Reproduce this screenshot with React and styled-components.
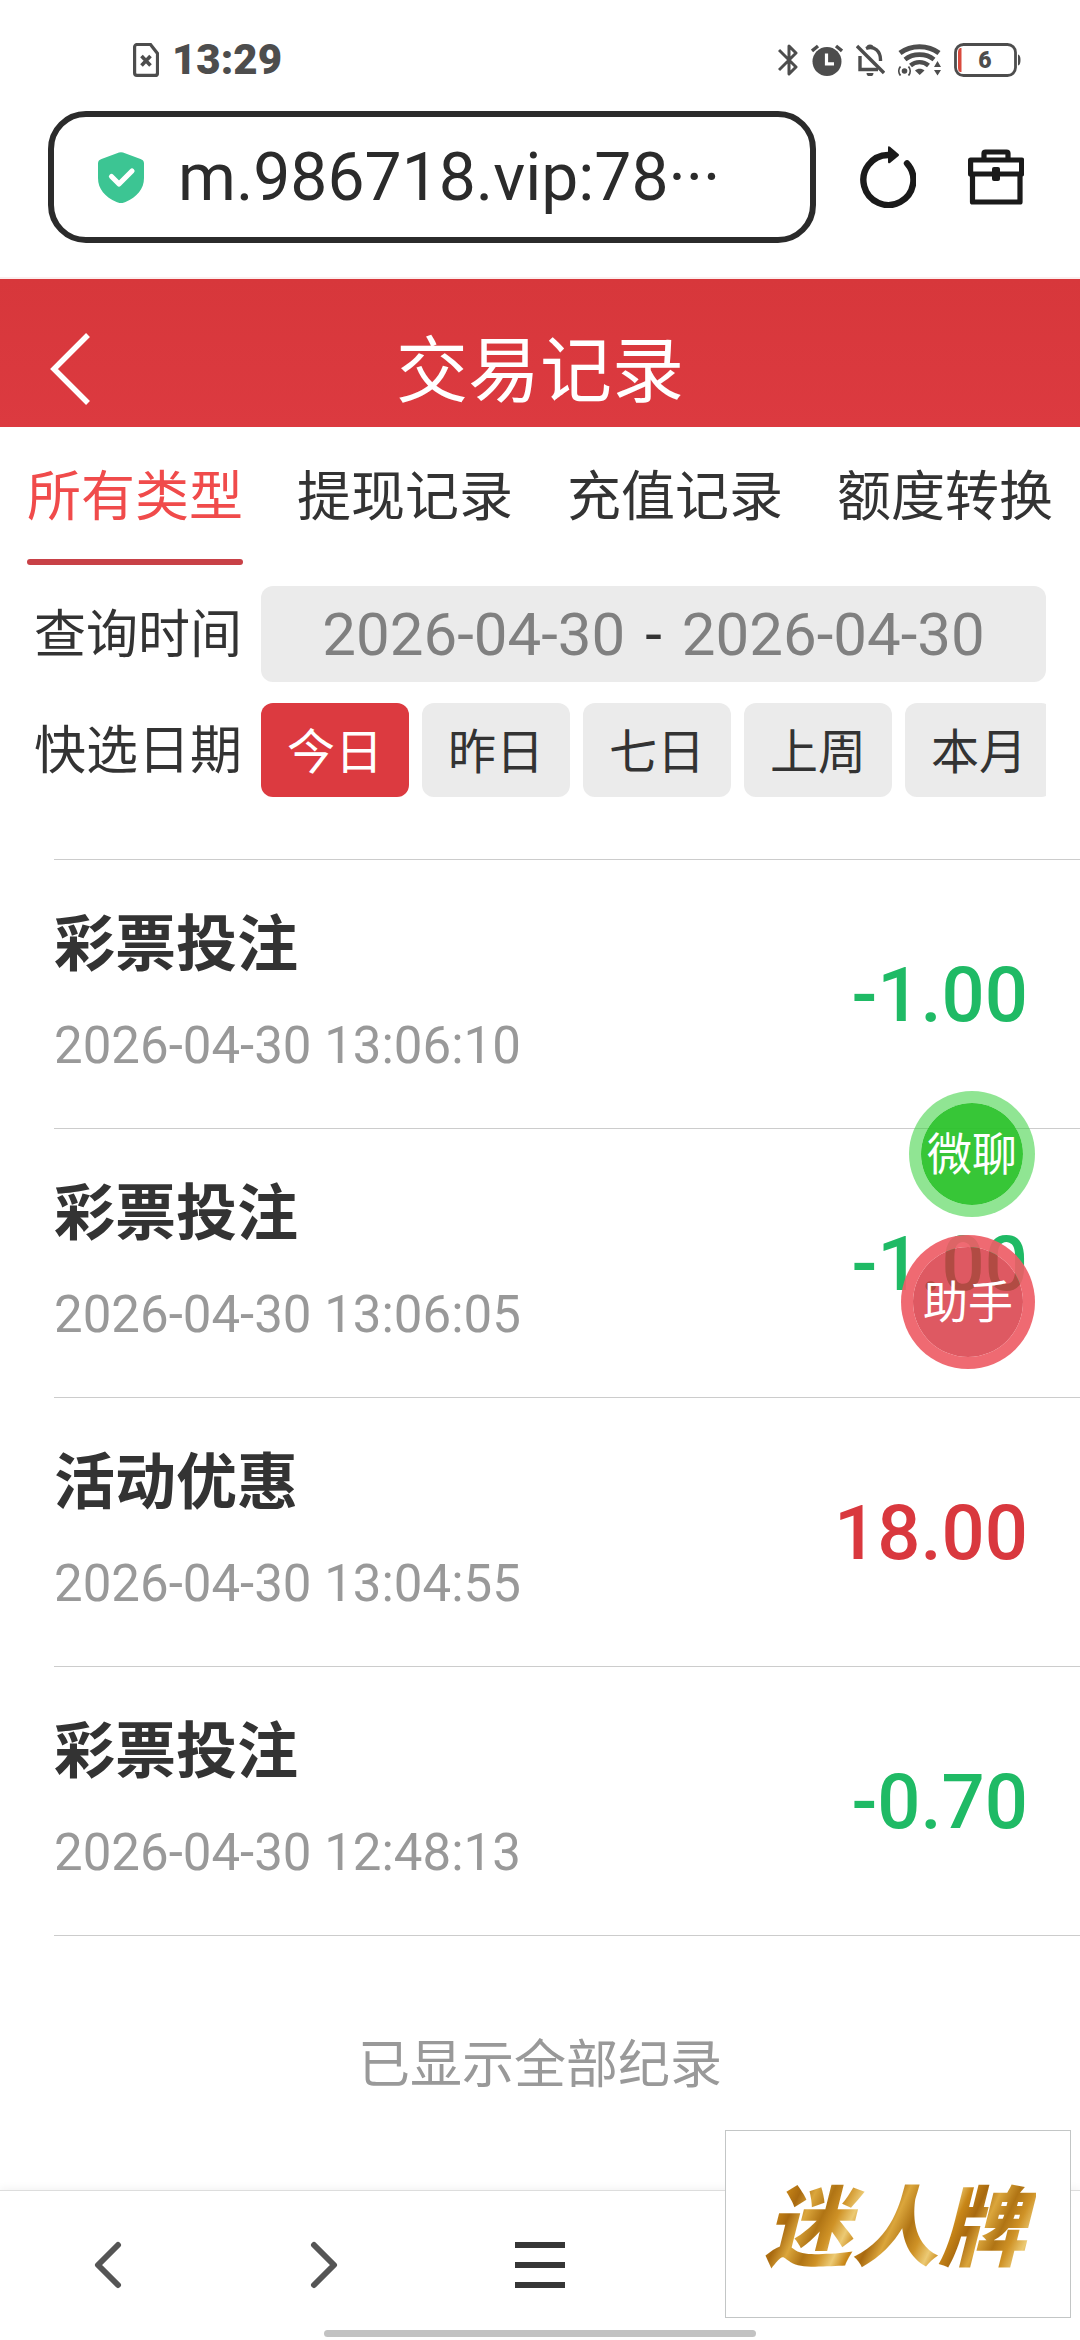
import React, { useState } from 'react';
import styled, { createGlobalStyle } from 'styled-components';

const color = {
  accent: '#dc3a40',
  accentDark: '#d7373b',
  dark: '#2b2b2b',
  field: '#ebebeb',
  gray: '#999999',
  green: '#1fba65',
  line: '#cccccc',
  status: '#4d4d4d',
  text: '#333333',
  white: '#ffffff',
};

const GlobalStyle = createGlobalStyle`
  * {
    box-sizing: border-box;
  }

  body {
    background-color: ${color.white};
    color: ${color.text};
    font-family: Roboto, 'Noto Sans CJK SC', sans-serif;
    margin: 0;
  }

  button,
  input {
    background: none;
    border: 0;
    color: inherit;
    font: inherit;
    margin: 0;
    padding: 0;
  }

  svg {
    display: block;
  }
`;

const StyledPage = styled.div`
  display: flex;
  flex-direction: column;
  min-height: 100vh;
  position: relative;
`;

const StyledStatusBar = styled.div`
  align-items: center;
  color: ${color.status};
  display: flex;
  height: 76px;
  justify-content: space-between;
  margin-bottom: 35px;
  padding: 43px 59px 0 133px;
`;

const StyledStatusGroup = styled.div`
  align-items: center;
  display: flex;
  gap: 13px;
`;

const StyledTime = styled.time`
  font-size: 42px;
  font-weight: 900;
  line-height: 32px;
`;

const StyledBrowserBar = styled.div`
  align-items: center;
  border-bottom: 2px solid #fbeeee;
  display: flex;
  padding: 0 56px 34px 48px;
`;

const StyledAddress = styled.label`
  align-items: center;
  border: 6px solid ${color.dark};
  border-radius: 38px;
  color: ${color.dark};
  display: flex;
  flex: 1;
  gap: 34px;
  height: 132px;
  margin-right: 44px;
  min-width: 0;
  padding: 0 44px;
`;

const StyledAddressInput = styled.input`
  flex: 1;
  font-size: 66px;
  height: 88px;
  min-width: 0;
  outline: none;
`;

const StyledBrowserButton = styled.button`
  color: #1a1a1a;

  & + & {
    margin-left: 52px;
  }
`;

const StyledHeader = styled.header`
  align-items: center;
  background: linear-gradient(${color.accentDark}, ${color.accent});
  color: ${color.white};
  display: grid;
  grid-template-columns: 1fr auto 1fr;
  height: 148px;
  padding: 32px 50px 0;
`;

const StyledTitle = styled.h1`
  font-size: 72px;
  font-weight: 400;
  line-height: 100px;
  margin: 0;
  padding-top: 6px;
`;

const StyledMain = styled.main`
  flex: 1;
`;

const StyledTabs = styled.div`
  display: grid;
  grid-template-columns: repeat(4, 1fr);
  justify-items: center;
`;

const StyledTab = styled.button`
  color: ${({ $active }) => ($active ? '#f04b4b' : color.text)};
  font-size: 54px;
  line-height: 64px;
  padding: 39px 0 0;
  white-space: nowrap;

  &::after {
    background-color: ${({ $active }) => ($active ? '#c84147' : 'transparent')};
    border-radius: 3px;
    content: '';
    display: block;
    height: 6px;
    margin-top: 29px;
  }
`;

const StyledFilters = styled.div`
  display: grid;
  gap: 21px;
  grid-template-columns: minmax(0, 1fr);
  padding: 21px 34px 62px 34px;
`;

const StyledFilterRow = styled.div`
  align-items: center;
  display: flex;
  gap: 19px;
`;

const StyledFilterLabel = styled.label`
  font-size: 52px;
  line-height: 90px;
  padding-top: 4px;
  white-space: nowrap;
`;

const StyledDateRange = styled.div`
  align-items: center;
  background-color: ${color.field};
  border-radius: 12px;
  display: flex;
  flex: 1;
  font-size: 60px;
  gap: 20px;
  height: 96px;
  min-width: 0;
`;

const StyledDateInput = styled.input`
  color: #808080;
  flex: 1;
  height: 96px;
  min-width: 0;
  text-align: ${({ $align }) => $align};
`;

const StyledQuickDates = styled.div`
  display: flex;
  flex: 1;
  gap: 13px;
  min-width: 0;
  overflow: hidden;
`;

const StyledQuickDate = styled.button`
  background-color: ${({ $active }) => ($active ? color.accent : color.field)};
  border-radius: 12px;
  color: ${({ $active }) => ($active ? color.white : color.text)};
  flex: none;
  font-size: 48px;
  height: 94px;
  padding-bottom: 5px;
  width: 148px;
`;

const StyledList = styled.ul`
  border-top: 1px solid ${color.line};
  list-style: none;
  margin: 0 0 0 54px;
  padding: 0;
`;

const StyledRecord = styled.li`
  align-items: center;
  border-bottom: 1px solid ${color.line};
  display: flex;
  justify-content: space-between;
  padding: 45px 52px 52px 0;
`;

const StyledRecordTitle = styled.h2`
  font-size: 61px;
  font-weight: 700;
  line-height: 80px;
  margin: 0 0 31px;
`;

const StyledRecordTime = styled.time`
  color: ${color.gray};
  display: block;
  font-size: 51px;
  line-height: 60px;
`;

const StyledAmount = styled.span`
  color: ${({ $income }) => ($income ? '#d9383e' : color.green)};
  font-size: 76px;
  font-weight: 500;
  line-height: 80px;
  padding-top: 8px;
`;

const StyledEnd = styled.p`
  color: ${color.gray};
  font-size: 52px;
  line-height: 80px;
  margin: 0;
  padding: 90px 0 57px;
  text-align: center;
`;

const StyledFloatButton = styled.button`
  background-clip: padding-box;
  background-color: ${({ $tone }) => $tone.fill};
  border: 12px solid ${({ $tone }) => $tone.ring};
  border-radius: 50%;
  color: ${color.white};
  font-size: 45px;
  height: ${({ $size }) => $size}px;
  line-height: 60px;
  padding-top: 3px;
  position: absolute;
  right: 45px;
  top: ${({ $top }) => $top}px;
  white-space: nowrap;
  width: ${({ $size }) => $size}px;
`;

const StyledFloatText = styled.span`
  display: flex;
  justify-content: center;
  margin: 0 -12px;
`;

const StyledBottomBar = styled.nav`
  background-color: ${color.white};
  border-top: 1px solid #dddddd;
  bottom: 0;
  box-shadow: 0 -2px 8px rgba(0, 0, 0, 0.05);
  padding-bottom: 3px;
  position: sticky;
`;

const StyledBottomButtons = styled.div`
  align-items: center;
  display: grid;
  grid-template-columns: repeat(5, 1fr);
  height: 139px;
  justify-items: center;
  padding-top: 8px;
`;

const StyledHomeIndicator = styled.div`
  background-color: #c2c2c2;
  border-radius: 4px;
  height: 7px;
  margin: 0 auto;
  width: 40%;
`;

const StyledAd = styled.a`
  align-items: center;
  background-color: ${color.white};
  border: 1px solid #c3c6c6;
  bottom: 22px;
  display: flex;
  height: 188px;
  justify-content: center;
  padding: 0 6px 6px 0;
  position: fixed;
  right: 9px;
  text-decoration: none;
  width: 346px;
`;

const StyledAdText = styled.span`
  background: repeating-linear-gradient(
    115deg,
    #b07414 0,
    #cf9226 14px,
    #ecca74 28px,
    #c98718 40px,
    #a8690f 54px,
    #dba63c 68px,
    #b07414 84px
  );
  background-clip: text;
  color: transparent;
  font-family: 'Noto Sans CJK SC', sans-serif;
  font-size: 87px;
  font-style: italic;
  font-weight: 900;
  line-height: 120px;
  padding: 0 10px;
`;

const SimIcon = () => (
  <svg width="26" height="34" viewBox="0 0 26 34" fill="none" stroke="currentColor">
    <path d="M4 1.5h13.5l7 9V30a2.4 2.4 0 0 1-2.4 2.4H4A2.4 2.4 0 0 1 1.6 30V4A2.4 2.4 0 0 1 4 1.5z" strokeWidth="3.2" />
    <path d="M8.5 13l9 9.5M17.5 13l-9 9.5" strokeWidth="3.6" />
  </svg>
);

const BluetoothIcon = () => (
  <svg width="20" height="32" viewBox="0 0 20 32" fill="none" stroke="currentColor" strokeWidth="3">
    <path d="M1 6l17 17-7 7V2l7 7L1 26" strokeLinejoin="round" />
  </svg>
);

const AlarmIcon = () => (
  <svg width="32" height="32" viewBox="0 0 32 32" fill="none" stroke="currentColor">
    <circle cx="16" cy="17.5" r="14.5" fill="currentColor" stroke="none" />
    <path d="M1 7l6-5M31 7l-6-5" strokeWidth="3.4" />
    <path d="M15.5 9.5v10.4h7.5" stroke="#fff" strokeWidth="3.2" />
  </svg>
);

const BellOffIcon = () => (
  <svg width="29" height="32" viewBox="0 0 29 32" fill="none" stroke="currentColor" strokeWidth="3.4">
    <path d="M4 12v13.5h18" />
    <path d="M10 4.5C18 1 25 7 24.5 17" />
    <path d="M1 2l27 27" />
    <path d="M10.5 29h7a3.5 3.5 0 0 1-7 0z" fill="currentColor" stroke="none" />
    <path d="M10.5 3.5a3.5 3 0 0 1 7 0" fill="currentColor" stroke="none" />
  </svg>
);

const WifiIcon = () => (
  <svg width="43" height="32" viewBox="0 0 43 32" fill="none" stroke="currentColor">
    <path d="M2 9C13 .5 30 .5 41 9" strokeWidth="5" />
    <path d="M7 15.5c8-6.500 21-6.500 29 0" strokeWidth="4.600" />
    <path d="M12.500 21.500c5-4.500 13-4.500 18 0" strokeWidth="4.400" />
    <path d="M17 26.500c2.500-2.500 7-2.500 9.500 0L21.700 31z" fill="currentColor" stroke="none" />
    <circle cx="6.500" cy="27" r="2.800" fill="currentColor" stroke="none" />
    <path d="M2.500 22.500a7 7 0 0 0 0 9M10.500 22.500a7 7 0 0 1 0 9" strokeWidth="1.800" />
    <path d="M36 23h7l-3.500-6zM36 26h7l-3.500 5.500z" fill="currentColor" stroke="none" />
  </svg>
);

const BatteryIcon = () => (
  <svg width="67" height="34" viewBox="0 0 67 34" fill="none">
    <rect x="1.5" y="1.5" width="60" height="31" rx="8" stroke="currentColor" strokeWidth="2.8" />
    <path d="M7.5 5v24H6q-2-1-2-4V9q0-3 2-4z" fill="#d94a3d" />
    <path d="M64 11.5q2.500.5 2.500 5.500t-2.500 5.500z" fill="currentColor" />
    <text x="31" y="25" textAnchor="middle" fontSize="23" fontWeight="900" fill="currentColor">
      6
    </text>
  </svg>
);

const ShieldIcon = () => (
  <svg width="46" height="51" viewBox="0 0 46 51" fill="none">
    <path
      d="M19 1.2a10 10 0 0 1 8 0L42.5 7A5 5 0 0 1 46 12v14c0 11-7 19-18.500 24a10 10 0 0 1-9 0C7 45 0 37 0 26V12a5 5 0 0 1 3.500-5z"
      fill="#3cc593"
    />
    <path d="M13.5 24.5l7.500 7.500L34 19" stroke="#fff" strokeWidth="5.200" strokeLinecap="round" strokeLinejoin="round" />
  </svg>
);

const ReloadIcon = () => (
  <svg width="56" height="62" viewBox="0 0 56 62" fill="none">
    <path d="M28 9a25 25 0 1 0 19 8.300" stroke="currentColor" strokeWidth="6.400" strokeLinecap="round" />
    <path d="M28 1.500q0-2 2-.8l8.500 7.300q1 1 0 2L30 17q-2 1-2-1z" fill="currentColor" />
  </svg>
);

const ToolboxIcon = () => (
  <svg width="56" height="56" viewBox="0 0 56 56" fill="none" stroke="currentColor" strokeWidth="5.200" strokeLinejoin="round">
    <path d="M2.600 25V11h51v14z" />
    <path d="M4.500 25v28h47.500V25" />
    <path d="M16 11V4.500q0-1.500 1.500-1.500h21q1.500 0 1.500 1.500V11" />
    <rect x="24" y="18" width="8" height="14" rx="2" fill="currentColor" stroke="none" />
  </svg>
);

const BackIcon = () => (
  <svg width="41" height="74" viewBox="0 0 41 74" fill="none" stroke="currentColor" strokeWidth="5.500">
    <path d="M38 3L4 37l34 34" />
  </svg>
);

const ChevronIcon = ({ flip }) => (
  <svg width="28" height="48" viewBox="0 0 28 48" fill="none" stroke="#555" strokeWidth="6" strokeLinecap="round" strokeLinejoin="round">
    <path d={flip ? 'M4 4l20 20L4 44' : 'M24 4L4 24l20 20'} />
  </svg>
);

const MenuIcon = () => (
  <svg width="50" height="46" viewBox="0 0 50 46" fill="#363636">
    <path d="M0 0h50v6H0zM0 20h50v6H0zM0 40h50v6H0z" />
  </svg>
);

const tabs = ['所有类型', '提现记录', '充值记录', '额度转换'];

const quickDates = ['今日', '昨日', '七日', '上周', '本月'];

const records = [
  { title: '彩票投注', time: '2026-04-30 13:06:10', amount: '-1.00' },
  { title: '彩票投注', time: '2026-04-30 13:06:05', amount: '-1.00' },
  { title: '活动优惠', time: '2026-04-30 13:04:55', amount: '18.00' },
  { title: '彩票投注', time: '2026-04-30 12:48:13', amount: '-0.70' },
];

const tones = {
  chat: { fill: 'rgba(42, 194, 42, 0.94)', ring: 'rgba(53, 208, 58, 0.55)' },
  helper: { fill: 'rgba(214, 48, 59, 0.8)', ring: 'rgba(238, 93, 102, 0.92)' },
};

const App = () => {
  const [tab, setTab] = useState(tabs[0]);
  const [quickDate, setQuickDate] = useState(quickDates[0]);

  return (
    <StyledPage>
      <GlobalStyle />

      <StyledStatusBar>
        <StyledStatusGroup>
          <SimIcon />
          <StyledTime>13:29</StyledTime>
        </StyledStatusGroup>
        <StyledStatusGroup>
          <BluetoothIcon />
          <AlarmIcon />
          <BellOffIcon />
          <WifiIcon />
          <BatteryIcon />
        </StyledStatusGroup>
      </StyledStatusBar>

      <StyledBrowserBar>
        <StyledAddress>
          <ShieldIcon />
          <StyledAddressInput aria-label="网址" readOnly value="m.986718.vip:78···" />
        </StyledAddress>
        <StyledBrowserButton aria-label="刷新">
          <ReloadIcon />
        </StyledBrowserButton>
        <StyledBrowserButton aria-label="工具箱">
          <ToolboxIcon />
        </StyledBrowserButton>
      </StyledBrowserBar>

      <StyledHeader>
        <button type="button" aria-label="返回">
          <BackIcon />
        </button>
        <StyledTitle>交易记录</StyledTitle>
      </StyledHeader>

      <StyledMain>
        <StyledTabs role="tablist">
          {tabs.map(name => (
            <StyledTab
              key={name}
              role="tab"
              aria-selected={name === tab}
              $active={name === tab}
              onClick={() => setTab(name)}
            >
              {name}
            </StyledTab>
          ))}
        </StyledTabs>

        <StyledFilters>
          <StyledFilterRow>
            <StyledFilterLabel htmlFor="date-from">查询时间</StyledFilterLabel>
            <StyledDateRange>
              <StyledDateInput id="date-from" $align="right" readOnly value="2026-04-30" />
              <span>-</span>
              <StyledDateInput aria-label="结束日期" $align="left" readOnly value="2026-04-30" />
            </StyledDateRange>
          </StyledFilterRow>
          <StyledFilterRow>
            <StyledFilterLabel as="span" id="quick-dates">
              快选日期
            </StyledFilterLabel>
            <StyledQuickDates role="group" aria-labelledby="quick-dates">
              {quickDates.map(name => (
                <StyledQuickDate
                  key={name}
                  $active={name === quickDate}
                  onClick={() => setQuickDate(name)}
                >
                  {name}
                </StyledQuickDate>
              ))}
            </StyledQuickDates>
          </StyledFilterRow>
        </StyledFilters>

        <StyledList>
          {records.map(({ title, time, amount }) => (
            <StyledRecord key={time}>
              <div>
                <StyledRecordTitle>{title}</StyledRecordTitle>
                <StyledRecordTime>{time}</StyledRecordTime>
              </div>
              <StyledAmount $income={Number(amount) > 0}>{amount}</StyledAmount>
            </StyledRecord>
          ))}
        </StyledList>

        <StyledEnd>已显示全部纪录</StyledEnd>
      </StyledMain>

      <StyledFloatButton $tone={tones.chat} $size={126} $top={1091}>
        <StyledFloatText>微聊</StyledFloatText>
      </StyledFloatButton>
      <StyledFloatButton $tone={tones.helper} $size={134} $top={1235}>
        <StyledFloatText>助手</StyledFloatText>
      </StyledFloatButton>

      <StyledBottomBar>
        <StyledBottomButtons>
          <button type="button" aria-label="后退">
            <ChevronIcon />
          </button>
          <button type="button" aria-label="前进">
            <ChevronIcon flip />
          </button>
          <button type="button" aria-label="菜单">
            <MenuIcon />
          </button>
        </StyledBottomButtons>
        <StyledHomeIndicator />
      </StyledBottomBar>

      <StyledAd href="#ad">
        <StyledAdText>迷人牌</StyledAdText>
      </StyledAd>
    </StyledPage>
  );
};

export default App;
